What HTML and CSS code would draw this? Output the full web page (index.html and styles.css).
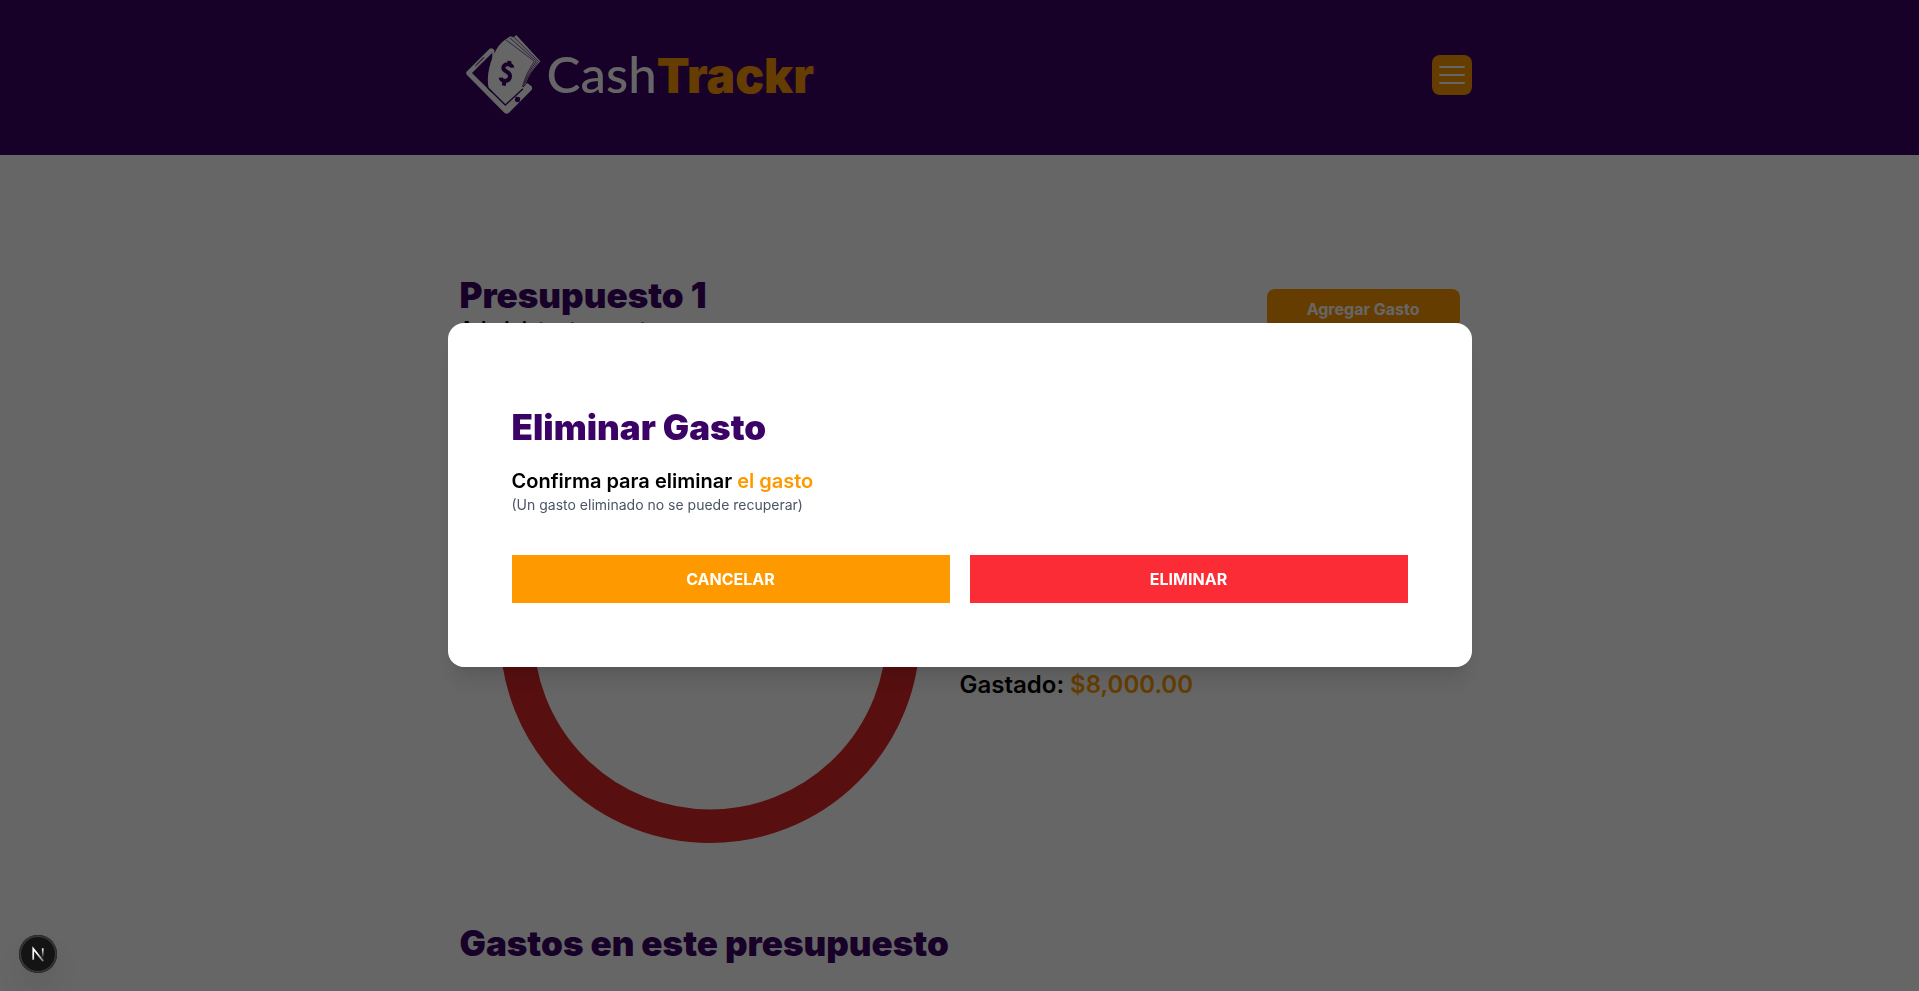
FILE: index.html
```html
<!DOCTYPE html>
<html lang="es">
<head>
<meta charset="utf-8">
<title>CashTrackr</title>
<link rel="stylesheet" href="styles.css">
</head>
<body>
<header class="header">
  <div class="container header-row">
    <a class="logo" href="#">
      <svg class="logo-mark" viewBox="30 40 231 246" aria-hidden="true">
        <path d="M36 152 L103 85 Q111 79 118 88 L118 110 L205 200 L216 187 L229 196 Q234 203 229 209 L162 276 Q155 282 148 276 L36 163 Q31 157 36 152 Z" fill="#fff"/>
        <path d="M51 157 L112 96 L112 218 Z" fill="#3c0366"/>
        <path d="M64 136 L86 113" stroke="#3c0366" stroke-width="6" stroke-linecap="round"/>
        <path d="M57 145 L102 100" stroke="#fff" stroke-width="5"/>
        <rect x="180" y="229" width="15" height="15" rx="4" transform="rotate(12 188 237)" fill="#3c0366"/>
        <path d="M184 43 L256 122 Q222 158 212 189 L196 203 L150 57 L166 47 L176 50 Z" fill="#fff"/>
        <path d="M150 57 Q158 62 240 122 Q212 158 203 196 L198 206 L151 250 L101 202 Q92 160 115 104 Q130 70 150 57 Z" fill="#fff"/>
        <path d="M152 57 L238 122 Q212 158 202 198 M165 52 L244 122 Q216 160 206 193 M176 49 L250 122 Q220 160 210 188" fill="none" stroke="#3c0366" stroke-width="2"/>
        <path d="M99 202 L151 253 L204 204" fill="none" stroke="#3c0366" stroke-width="4"/>
        <path d="M172 141 C171 128 144 127 145 142 C146 154 166 151 165 167 C163 186 138 183 137 171 M164 121 L161 134 M149 181 L146 195" fill="none" stroke="#3c0366" stroke-width="12"/>
      </svg>
      <span class="logo-text">Cash<b>Trackr</b></span>
    </a>
    <button class="menu" type="button" aria-label="Abrir menú">
      <svg viewBox="0 0 32 32" width="32" height="32" fill="none" stroke="currentColor" stroke-width="2" stroke-linecap="round" aria-hidden="true"><path d="M4 8h24M4 16h24M4 24h24"/></svg>
    </button>
  </div>
</header>

<main class="main">
  <div class="title-row">
    <div>
      <h1 class="heading">Presupuesto 1</h1>
      <p class="subtitle">Administra tus gastos</p>
    </div>
    <button class="add" type="button">Agregar Gasto</button>
  </div>
  <section class="summary">
    <div class="chart">
      <svg viewBox="0 0 100 100" role="img" aria-label="Gastado"><circle cx="50" cy="50" r="46" fill="none" stroke="#dc2626" stroke-width="8"/></svg>
    </div>
    <div class="amounts">
      <p>Gastado: <span>$8,000.00</span></p>
    </div>
  </section>
  <h2 class="heading">Gastos en este presupuesto</h2>
</main>

<div class="overlay">
  <div class="modal" role="dialog" aria-modal="true" aria-labelledby="modal-title">
    <h2 class="heading modal-title" id="modal-title">Eliminar Gasto</h2>
    <p class="question">Confirma para eliminar <span>el gasto</span></p>
    <p class="note">(Un gasto eliminado no se puede recuperar)</p>
    <div class="actions">
      <button class="cancel" type="button">Cancelar</button>
      <button class="delete" type="button">Eliminar</button>
    </div>
  </div>
</div>

<button class="devtools" type="button" aria-label="Next.js">
  <svg viewBox="0 0 40 40" fill="none" aria-hidden="true">
    <defs>
      <linearGradient id="stem" x1="0" y1="14" x2="0" y2="24" gradientUnits="userSpaceOnUse"><stop stop-color="#fff"/><stop offset="1" stop-color="#fff" stop-opacity="0"/></linearGradient>
      <linearGradient id="slant" x1="20" y1="18" x2="26" y2="27" gradientUnits="userSpaceOnUse"><stop stop-color="#fff"/><stop offset="1" stop-color="#fff" stop-opacity=".4"/></linearGradient>
    </defs>
    <path d="M15 26V14.500L25.500 27.500" stroke="url(#slant)" stroke-width="1.800"/>
    <path d="M25 14V24" stroke="url(#stem)" stroke-width="1.800"/>
  </svg>
</button>
</body>
</html>
```
FILE: styles.css
```css
* { box-sizing: border-box; margin: 0; }
html, body { height: 100%; }
body {
  overflow: hidden;
  background: #fff;
  color: #000;
  font: 16px/24px Inter, "Liberation Sans", sans-serif;
}
button { border: 0; padding: 0; font: inherit; color: #fff; cursor: pointer; }

.header { background: #3c0366; padding: 34px 0 39px; }
.container { max-width: 1024px; margin: 0 auto; }
.header-row { display: flex; align-items: center; justify-content: space-between; }
.logo { display: flex; align-items: center; gap: 5px; padding-left: 17px; color: #fff; text-decoration: none; }
.logo-mark { width: 77px; height: 82px; }
.logo-text { font: 500 51px/56px Lato, sans-serif; }
.logo-text b { font: 900 48px/56px Inter, sans-serif; color: #fe9a00; }
.menu { display: grid; place-items: center; width: 40px; height: 40px; border-radius: 8px; background: #fe9a00; }

.main { max-width: 1000px; margin: 0 auto; padding-top: 120px; }
.title-row { display: flex; align-items: center; justify-content: space-between; }
.heading { font-size: 35px; line-height: 40px; font-weight: 900; color: #3c0366; }
.subtitle { font-size: 20px; line-height: 28px; font-weight: 600; }
.add { padding: 8px 40px; border-radius: 8px; background: #fe9a00; font-weight: 700; }
.summary { display: grid; grid-template-columns: 1fr 1fr; align-items: center; margin: 40px 0; }
.chart { padding: 40px; }
.chart svg { display: block; width: 100%; }
.amounts { padding-top: 104px; font-size: 24px; line-height: 32px; font-weight: 600; }
.amounts span, .question span { color: #fe9a00; }

.overlay { position: fixed; inset: 0; display: grid; place-items: center; padding-bottom: 1px; background: rgba(0, 0, 0, .6); }
.modal {
  width: 100%;
  max-width: 1024px;
  padding: 64px;
  border-radius: 16px;
  background: #fff;
  box-shadow: 0 20px 25px -5px rgba(0, 0, 0, .1), 0 8px 10px -6px rgba(0, 0, 0, .1);
}
.modal-title { margin: 20px 0; }
.question { font-size: 20px; line-height: 28px; font-weight: 600; }
.note { font-size: 14px; line-height: 20px; color: #4a5565; }
.actions { display: grid; grid-template-columns: 1fr 1fr; gap: 20px; margin-top: 40px; }
.actions button { padding: 12px; font-weight: 700; text-transform: uppercase; }
.cancel { background: #fe9a00; }
.delete { background: #fb2c36; }

.devtools {
  position: fixed;
  left: 19px;
  bottom: 18px;
  width: 38px;
  height: 38px;
  border-radius: 50%;
  background: #141414;
  box-shadow: inset 0 0 0 1px #2c2c2c, inset 0 0 0 2px #3c3c3c, 0 16px 32px -8px rgba(0, 0, 0, .2);
}
.devtools svg { display: block; width: 38px; height: 38px; }
```
